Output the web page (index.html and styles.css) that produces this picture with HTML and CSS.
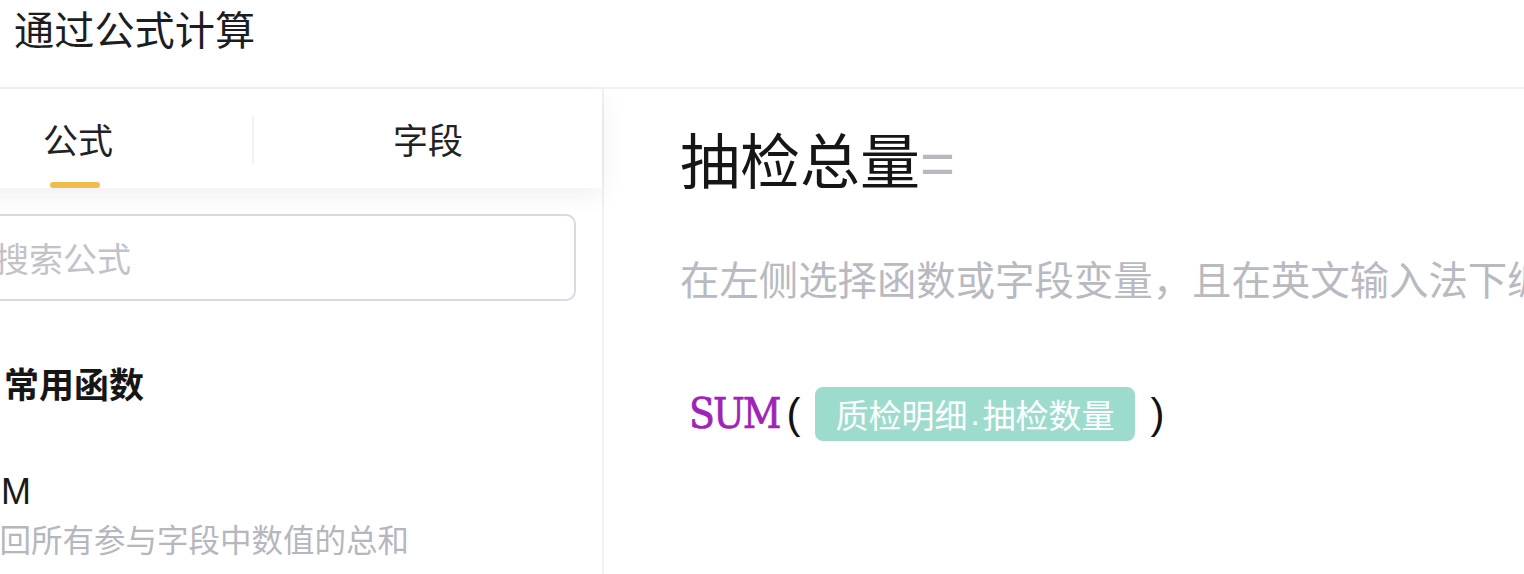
FILE: index.html
```html
<!DOCTYPE html>
<html lang="zh-CN">
<head>
<meta charset="utf-8">
<title>通过公式计算</title>
<link rel="stylesheet" href="styles.css">
</head>
<body>
<div class="page">
  <header class="header">
    <h1 class="title">通过公式计算</h1>
  </header>
  <div class="main">
    <aside class="side">
      <div class="tabs">
        <div class="tab active">公式</div>
        <div class="tab-sep"></div>
        <div class="tab">字段</div>
      </div>
      <div class="side-body">
        <div class="search">搜索公式</div>
        <div class="group-title">常用函数</div>
        <div class="fn-item">
          <div class="fn-name">SUM</div>
          <div class="fn-desc">返回所有参与字段中数值的总和</div>
        </div>
      </div>
    </aside>
    <section class="editor">
      <div class="target">抽检总量<span class="eq">=</span></div>
      <div class="hint">在左侧选择函数或字段变量，且在英文输入法下编辑公式</div>
      <div class="formula">
        <span class="fn">SUM</span>
        <span class="paren">(</span>
        <span class="chip">质检明细<span class="dot">.</span>抽检数量</span>
        <span class="paren close">)</span>
      </div>
    </section>
  </div>
</div>
</body>
</html>
```

FILE: styles.css
```css
* { box-sizing: border-box; margin: 0; padding: 0; }
html, body { width: 1524px; height: 574px; overflow: hidden; background: #fff; }
body {
  font-family: "Liberation Sans", "Noto Sans CJK SC", sans-serif;
  color: #1f1f1f;
}
.page { width: 1524px; height: 574px; overflow: hidden; display: flex; flex-direction: column; }

.header {
  height: 89px;
  flex: none;
  border-bottom: 2px solid #f1f1f3;
  padding-left: 14px;
}
.title {
  font-size: 40.2px;
  font-weight: 400;
  line-height: 64px;
  color: #1d1d1f;
}

.main { flex: 1; display: flex; min-height: 0; }

.side {
  flex: none;
  width: 706px;
  margin-left: -102px;
  border-right: 2px solid #f1f1f3;
  display: flex;
  flex-direction: column;
}
.tabs {
  height: 99px;
  display: flex;
  align-items: center;
  box-shadow: 0 8px 22px rgba(40, 50, 90, 0.07);
  position: relative;
  z-index: 1;
  background: #fff;
}
.tab {
  flex: 1;
  height: 100%;
  display: flex;
  align-items: center;
  justify-content: center;
  font-size: 35px;
  color: #222;
  position: relative;
}
.tab.active { padding-left: 6px; }
.tab.active::after {
  content: "";
  position: absolute;
  left: 50%;
  bottom: 0;
  width: 50px;
  height: 6px;
  margin-left: -25px;
  border-radius: 3px;
  background: #efbd48;
}
.tab-sep { width: 2px; height: 48px; background: #f3f3f5; margin-top: 2px; }

.side-body { padding: 26px 26px 0; }
.search {
  height: 87px;
  border: 2px solid #d6dae4;
  border-radius: 10px;
  padding-left: 69px;
  display: flex;
  align-items: center;
  font-size: 34px;
  color: #c2c2c9;
}
.group-title {
  margin-top: 60px;
  padding-left: 80px;
  font-size: 35px;
  font-weight: 700;
  line-height: 50px;
  color: #161616;
}
.fn-item { margin-top: 57px; padding-left: 44px; }
.fn-name {
  margin-left: -17px;
  font-size: 36px;
  line-height: 48px;
  color: #1a1a1a;
}
.fn-desc {
  font-size: 31.5px;
  line-height: 50px;
  color: #b6b6be;
  white-space: nowrap;
}

.editor {
  flex: 1;
  min-width: 0;
  padding: 35px 0 0 76px;
  overflow: hidden;
}
.target {
  font-size: 60px;
  line-height: 80px;
  color: #161616;
  white-space: nowrap;
}
.eq { color: #b8b8c0; }
.hint {
  margin-top: 49px;
  font-size: 39.4px;
  line-height: 56px;
  color: #b9b9c1;
  white-space: nowrap;
}
.formula {
  margin-top: 78px;
  display: flex;
  align-items: center;
  height: 54px;
  padding-left: 9px;
}
.fn {
  font-family: "DejaVu Serif", serif;
  font-stretch: condensed;
  font-size: 42px;
  letter-spacing: -2px;
  font-weight: 400;
  -webkit-text-stroke: 0.7px #a023b8;
  color: #a023b8;
  line-height: 54px;
}
.paren {
  font-size: 42px;
  line-height: 54px;
  color: #111;
  margin-left: 7px;
}
.chip {
  margin-left: 15px;
  height: 54px;
  padding: 0 20px;
  border-radius: 8px;
  background: #9ddccd;
  color: #fff;
  font-size: 33px;
  display: flex;
  align-items: center;
}
.dot { margin: 0 3px; }
.paren.close { margin-left: 16px; }
```
